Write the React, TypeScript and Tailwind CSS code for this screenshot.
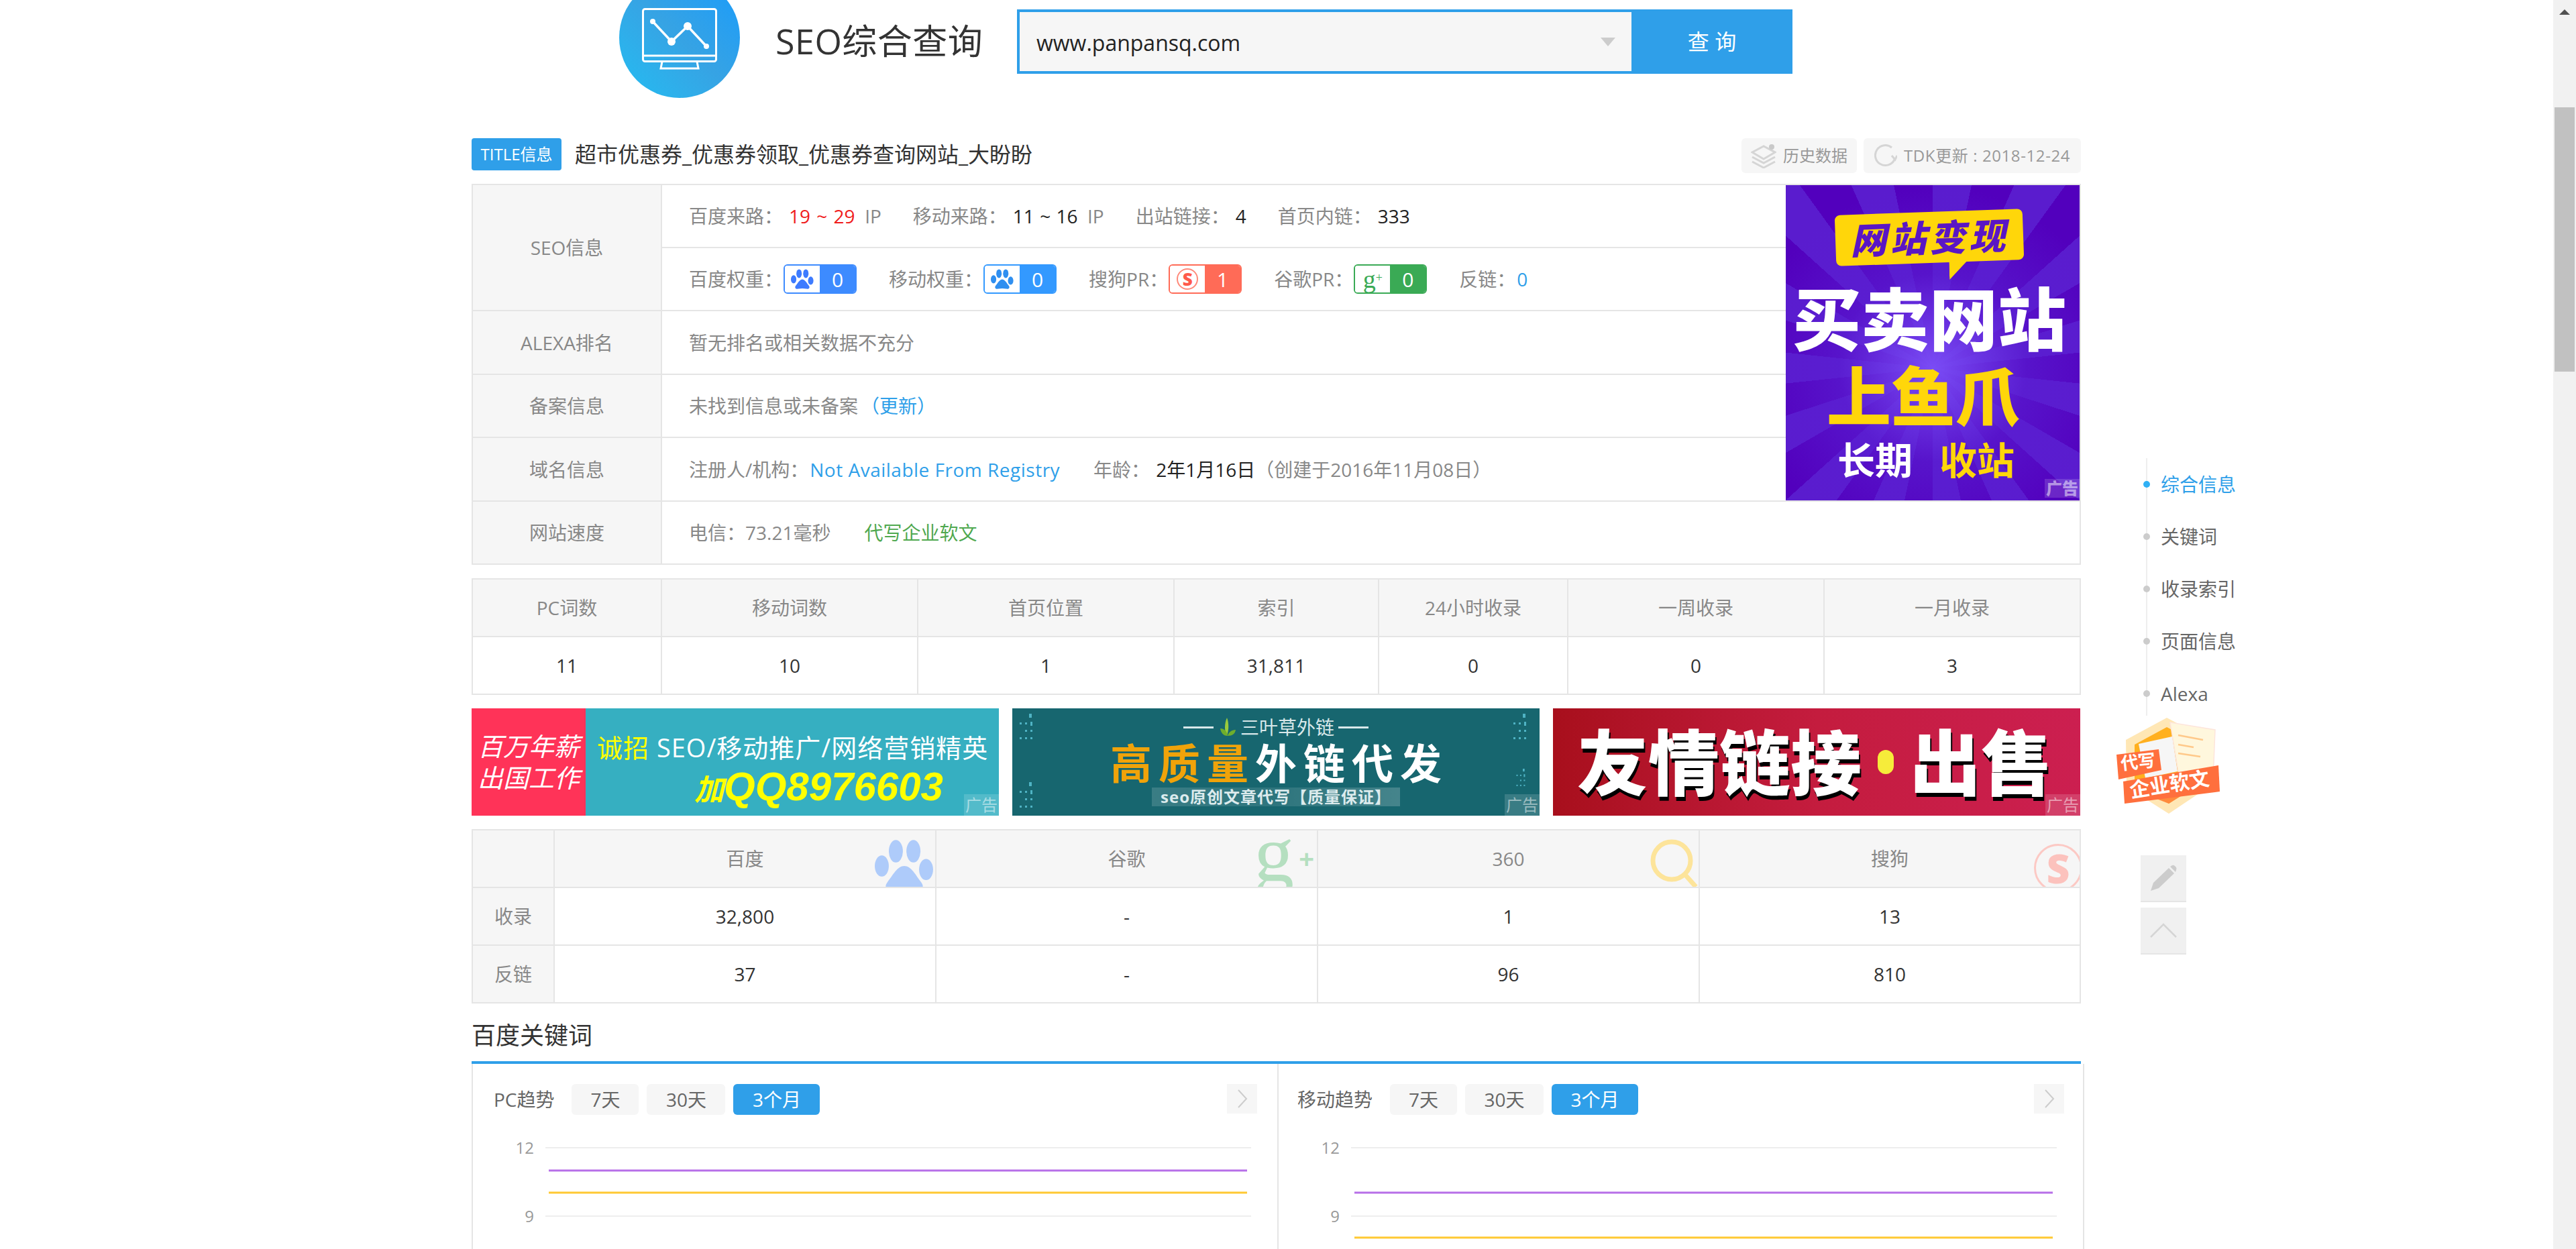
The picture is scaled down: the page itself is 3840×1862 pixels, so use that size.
import { FC, ReactNode } from "react";

const Paw: FC<{ className?: string; fill: string }> = ({ className, fill }) => (
  <svg viewBox="0 0 84 72" className={className} fill={fill}>
    <ellipse cx="10" cy="37" rx="10" ry="15" />
    <ellipse cx="30" cy="16" rx="10" ry="16" />
    <ellipse cx="55" cy="16" rx="10" ry="16" />
    <ellipse cx="73" cy="42" rx="10" ry="15" />
    <path d="M42 37C52 37 58 50 66 60C72 68 66 74 56 72C48 70 36 70 28 72C18 74 12 68 18 60C26 50 32 37 42 37Z" />
  </svg>
);

const Label: FC<{ children: ReactNode }> = ({ children }) => <span className="text-[#888]">{children}</span>;
const Val: FC<{ children: ReactNode }> = ({ children }) => <span className="text-[#222] ml-[9px] [word-spacing:1px]">{children}</span>;

const Rank: FC<{ border: string; bg: string; value: string; children: ReactNode }> = ({ border, bg, value, children }) => (
  <span className={`flex w-[109px] h-[44px] rounded-[6px] overflow-hidden border-2 ml-[1px] ${border}`}>
    <span className="w-[52px] flex items-center justify-center bg-white">{children}</span>
    <span className={`flex-1 flex items-center justify-center text-white text-[30px] ${bg}`}>{value}</span>
  </span>
);

const RowHead: FC<{ children: ReactNode }> = ({ children }) => (
  <div className="w-[282px] shrink-0 flex items-center justify-center bg-[#f6f6f6] border-r-2 border-[#e5e5e5] text-[#888]">{children}</div>
);

const AdTag: FC<{ className?: string }> = ({ className }) => (
  <span className={`absolute right-0 flex items-center justify-center w-[52px] text-[24px] leading-none bg-white/15 text-white/50 ${className}`}>广告</span>
);

const Cell: FC<{ head?: boolean; children?: ReactNode; last?: boolean }> = ({ head, children, last }) => (
  <div className={`flex items-center justify-center border-b-2 border-[#e5e5e5] ${last ? "" : "border-r-2"} ${head ? "bg-[#f6f6f6] text-[#888]" : "text-[#333]"}`}>
    {children}
  </div>
);

const Dots: FC<{ className?: string }> = ({ className }) => (
  <svg viewBox="0 0 40 44" className={className} fill="#4fb3c4">
    <rect x="20" y="0" width="4" height="6" />
    <rect x="6" y="13" width="3" height="3" />
    <rect x="14" y="13" width="3" height="3" />
    <rect x="22" y="12" width="3" height="6" />
    <rect x="14" y="24" width="3" height="3" />
    <rect x="22" y="24" width="3" height="3" />
    <rect x="6" y="35" width="3" height="3" />
    <rect x="14" y="35" width="3" height="3" />
    <rect x="22" y="35" width="3" height="3" />
  </svg>
);

const EngineHead: FC<{ name: string; children: ReactNode }> = ({ name, children }) => (
  <div className="relative overflow-hidden flex items-center justify-center bg-[#f6f6f6] text-[#888] border-b-2 border-r-2 border-[#e5e5e5]">
    {name}
    {children}
  </div>
);

const Tab: FC<{ active?: boolean; className: string; children: ReactNode }> = ({ active, className, children }) => (
  <span className={`flex items-center justify-center h-[46px] rounded-[6px] ${className} ${active ? "bg-[#2f9fe9] text-white" : "bg-[#f6f6f6] text-[#666]"}`}>
    {children}
  </span>
);

const TrendChart: FC<{ purple: number; yellow: number }> = ({ purple, yellow }) => (
  <svg width="1199" height="172" className="block" fontFamily="'Open Sans', sans-serif" fontSize="24" fill="#999">
    <text x="91" y="30" textAnchor="end">12</text>
    <text x="91" y="132" textAnchor="end">9</text>
    <line x1="108" x2="1160" y1="21" y2="21" stroke="#eeeeee" strokeWidth="2" />
    <line x1="108" x2="1160" y1="123" y2="123" stroke="#eeeeee" strokeWidth="2" />
    <line x1="113" x2="1154" y1={purple} y2={purple} stroke="#b76fe8" strokeWidth="3" />
    <line x1="113" x2="1154" y1={yellow} y2={yellow} stroke="#ffc933" strokeWidth="3" />
  </svg>
);

const TrendPanel: FC<{ title: string; pad: string; purple: number; yellow: number; border: string }> = ({ title, pad, purple, yellow, border }) => (
  <div className={`${border} border-[#e5e5e5]`}>
    <div className={`flex items-center h-[46px] mt-[30px] ${pad}`}>
      <span className="text-[#666] mr-[26px]">{title}</span>
      <div className="flex gap-[12px]">
        <Tab className="w-[100px]">7天</Tab>
        <Tab className="w-[117px]">30天</Tab>
        <Tab active className="w-[129px]">3个月</Tab>
      </div>
      <span className="ml-auto mb-[2px] w-[45px] h-[44px] bg-[#f6f6f6] flex items-center justify-center">
        <svg width="16" height="28" viewBox="0 0 16 28" fill="none" stroke="#cccccc" strokeWidth="2"><path d="M2 1L14 14L2 27" /></svg>
      </span>
    </div>
    <div className="mt-[28px]">
      <TrendChart purple={purple} yellow={yellow} />
    </div>
  </div>
);

const NavItem: FC<{ active?: boolean; children: ReactNode }> = ({ active, children }) => (
  <div className={`relative flex items-center h-[78px] pl-[20px] ${active ? "text-[#2f9fe9]" : "text-[#666]"}`}>
    <span className={`absolute -left-[6px] w-[10px] h-[10px] rounded-full ${active ? "bg-[#2fb0f5]" : "bg-[#cccccc]"}`} />
    {children}
  </div>
);

export default function App() {
  return (
    <div className="flex w-full h-[1862px] overflow-hidden bg-white text-[28px] font-['Open_Sans','Noto_Sans_CJK_SC',sans-serif]">
      <main className="w-[2399px] ml-[703px] shrink-0">
        {/* top search */}
        <div className="flex items-start h-[206px] pl-[220px]">
          <div className="w-[180px] h-[180px] -mt-[34px] shrink-0 rounded-full bg-linear-to-tr from-[#20bdf2] via-[#36a3e4] to-[#159bfb] flex items-center justify-center pt-[4px]">
            <svg width="112" height="92" viewBox="0 0 112 92" fill="none" stroke="white" strokeWidth="3">
              <rect x="1.5" y="1.5" width="109" height="78" rx="3" />
              <line x1="1.5" y1="71" x2="110" y2="71" />
              <path d="M30 80L28 90H84L82 80" />
              <path d="M16 20L44 50L68 27L96 57" strokeWidth="3.5" />
              <g fill="white" stroke="none">
                <circle cx="16" cy="20" r="4" />
                <circle cx="44" cy="50" r="6" />
                <circle cx="68" cy="27" r="6" />
                <circle cx="96" cy="57" r="4" />
              </g>
            </svg>
          </div>
          <h1 className="ml-[53px] mt-[26px] text-[52px] leading-[70px] tracking-[0.5px] text-[#333] whitespace-nowrap">SEO综合查询</h1>
          <div className="ml-auto mr-[430px] mt-[14px] flex w-[1156px] h-[96px] shrink-0">
            <div className="flex-1 flex items-center justify-between border-4 border-r-0 border-[#2f9fe9] bg-[#f6f6f6] pl-[25px] pr-[24px]">
              <span className="text-[32px] text-[#222] pt-[3px]">www.panpansq.com</span>
              <span className="w-0 h-0 border-x-[11px] border-t-[13px] border-x-transparent border-t-[#cccccc]" />
            </div>
            <button className="w-[240px] bg-[#2f9fe9] text-white text-[32px]">查 询</button>
          </div>
        </div>

        {/* title row */}
        <div className="flex h-[68px] items-start">
          <span className="flex items-center justify-center w-[134px] h-[48px] rounded-[4px] bg-[#2f9fe9] text-white text-[24px] whitespace-nowrap">TITLE信息</span>
          <span className="ml-[20px] h-[48px] flex items-center text-[32px] text-[#333]">超市优惠券_优惠券领取_优惠券查询网站_大盼盼</span>
          <span className="ml-auto flex items-center gap-[10px] w-[172px] h-[52px] pl-[14px] rounded-[6px] bg-[#f6f6f6] text-[24px] text-[#999]">
            <svg width="38" height="38" viewBox="0 0 38 38" fill="none" stroke="#d5d5d5" strokeWidth="3">
              <path d="M2 14L19 5L36 14L19 24Z" />
              <path d="M2 21L19 30L36 21" />
              <path d="M2 28L19 37L36 28" />
              <circle cx="31" cy="6" r="4" fill="#c9c9c9" stroke="none" />
            </svg>
            历史数据
          </span>
          <span className="ml-[10px] flex items-center gap-[10px] w-[324px] h-[52px] pl-[16px] rounded-[6px] bg-[#f6f6f6] text-[24px] tracking-[0.6px] text-[#999] whitespace-nowrap">
            <svg width="34" height="36" viewBox="0 0 34 36" fill="none" stroke="#d5d5d5" strokeWidth="3">
              <path d="M26 6A15 15 0 1 0 30 24" />
              <path d="M26 18L31 24L34 18" />
            </svg>
            TDK更新 : 2018-12-24
          </span>
        </div>

        {/* seo info */}
        <div className="relative border-2 border-b-0 border-[#e5e5e5]">
          <div className="flex h-[188px] border-b-2 border-[#e5e5e5]">
            <RowHead>SEO信息</RowHead>
            <div className="flex-1 flex flex-col">
              <div className="flex items-center h-[92px] pl-[40px] gap-[47px] border-b-2 border-[#e5e5e5] box-content">
                <span className="flex"><Label>百度来路：</Label><span className="text-[#f01c1c] ml-[9px] [word-spacing:2px]">19 ~ 29</span><Label>&nbsp;&nbsp;IP</Label></span>
                <span className="flex"><Label>移动来路：</Label><Val>11 ~ 16</Val><Label>&nbsp;&nbsp;IP</Label></span>
                <span className="flex"><Label>出站链接：</Label><Val>4</Val></span>
                <span className="flex"><Label>首页内链：</Label><Val>333</Val></span>
              </div>
              <div className="flex items-center h-[92px] pl-[40px] gap-[48px]">
                <span className="flex items-center">
                  <Label>百度权重：</Label>
                  <Rank border="border-[#3d8bff]" bg="bg-[#3d8bff]" value="0"><Paw fill="#3d7bff" className="w-[34px] h-[32px]" /></Rank>
                </span>
                <span className="flex items-center">
                  <Label>移动权重：</Label>
                  <Rank border="border-[#3399ff]" bg="bg-[#3399ff]" value="0"><Paw fill="#2f8ff0" className="w-[34px] h-[32px]" /></Rank>
                </span>
                <span className="flex items-center">
                  <Label>搜狗PR：</Label>
                  <Rank border="border-[#ff6b57]" bg="bg-[#ff6b57]" value="1">
                    <span className="flex items-center justify-center w-[32px] h-[32px] rounded-full border-2 border-[#ff8a7a] text-[#ff5a4a] text-[26px] font-black leading-none">S</span>
                  </Rank>
                </span>
                <span className="flex items-center">
                  <Label>谷歌PR：</Label>
                  <Rank border="border-[#3aaa55]" bg="bg-[#3aaa55]" value="0">
                    <span className="text-[#3aaa55] text-[38px] leading-none font-['Liberation_Serif',serif]">g<sup className="text-[18px]">+</sup></span>
                  </Rank>
                </span>
                <span className="flex items-center"><Label>反链：</Label><span className="text-[#2f9fe9] ml-[2px]">0</span></span>
              </div>
            </div>
          </div>
          <div className="flex h-[95px] border-b-2 border-[#e5e5e5]">
            <RowHead>ALEXA排名</RowHead>
            <div className="flex items-center pl-[40px] text-[#888]">暂无排名或相关数据不充分</div>
          </div>
          <div className="flex h-[94px] border-b-2 border-[#e5e5e5]">
            <RowHead>备案信息</RowHead>
            <div className="flex items-center pl-[40px] text-[#888]">未找到信息或未备案<span className="ml-[4px] text-[#2f9fe9]">（更新）</span></div>
          </div>
          <div className="flex h-[95px] border-b-2 border-[#e5e5e5]">
            <RowHead>域名信息</RowHead>
            <div className="flex items-center pl-[40px] text-[#888]">
              注册人/机构：<span className="ml-[2px] text-[#2f9fe9] tracking-[0.5px]">Not Available From Registry</span>
              <span className="ml-[50px]">年龄：</span>
              <Val>2年1月16日</Val>
              <span>（创建于2016年11月08日）</span>
            </div>
          </div>
          <div className="flex h-[94px] border-b-2 border-[#e5e5e5]">
            <RowHead>网站速度</RowHead>
            <div className="flex items-center pl-[40px] text-[#888]">
              电信：73.21毫秒<span className="ml-[50px] text-[#4fa84f]">代写企业软文</span>
            </div>
          </div>

          {/* ad over the table */}
          <div className="absolute right-0 top-0 w-[438px] h-[470px] overflow-hidden flex flex-col items-center pt-[40px] pr-[10px] font-black bg-[radial-gradient(circle_at_50%_58%,#7a4cf5_0%,rgba(90,30,210,0.65)_40%,rgba(85,0,190,0)_78%),repeating-conic-gradient(from_0deg_at_50%_58%,#5a1cce_0deg_12deg,#5200bd_12deg_24deg)]">
            <div className="relative -rotate-2 w-[280px] h-[76px] rounded-[8px] bg-[#ffd60a] flex items-center justify-center text-[#5a16c4] text-[54px] leading-none italic tracking-[5px] whitespace-nowrap">
              网站变现
              <span className="absolute left-[168px] top-[74px] w-[28px] h-[28px] bg-[#ffd60a] [clip-path:polygon(0_0,100%_0,0_100%)]" />
            </div>
            <div className="mt-[33px] text-[102px] leading-none text-white whitespace-nowrap">买卖网站</div>
            <div className="mt-[15px] mr-[18px] text-[96px] leading-none text-[#ffd60a] whitespace-nowrap">上鱼爪</div>
            <div className="mt-[19px] mr-[10px] flex gap-[40px] text-[56px] leading-none font-bold whitespace-nowrap">
              <span className="text-white">长期</span>
              <span className="text-[#ffd60a]">收站</span>
            </div>
            <AdTag className="bottom-[4px] h-[28px]" />
          </div>
        </div>

        {/* word counts */}
        <div className="mt-[20px] border-2 border-b-0 border-[#e5e5e5] grid grid-cols-[282px_382px_382px_305px_282px_382px_1fr] grid-rows-[86px_86px]">
          {["PC词数", "移动词数", "首页位置", "索引", "24小时收录", "一周收录", "一月收录"].map((t, i) => (
            <Cell key={t} head last={i === 6}>{t}</Cell>
          ))}
          {["11", "10", "1", "31,811", "0", "0", "3"].map((t, i) => (
            <Cell key={i} last={i === 6}>{t}</Cell>
          ))}
        </div>

        {/* banners */}
        <div className="mt-[20px] flex gap-[20px] h-[160px]">
          <div className="relative w-[786px] flex bg-[#36afc1] overflow-hidden">
            <div className="w-[170px] bg-[#ff3358] text-white text-[38px] leading-[47px] italic flex flex-col items-center justify-center whitespace-nowrap">
              <span>百万年薪</span>
              <span>出国工作</span>
            </div>
            <div className="flex-1 flex flex-col pl-[17px] pt-[36px]">
              <div className="text-[38px] leading-[44px] text-white whitespace-nowrap tracking-[1px]"><span className="text-[#ffff00]">诚招</span> SEO/移动推广/网络营销精英</div>
              <div className="mt-[7px] ml-[145px] text-[#ffff00] italic font-bold text-[60px] leading-[60px] whitespace-nowrap font-['Liberation_Sans','Noto_Sans_CJK_SC',sans-serif]"><span className="text-[44px]">加</span>QQ8976603</div>
            </div>
            <AdTag className="bottom-0 h-[32px]" />
          </div>

          <div className="relative w-[786px] flex flex-col items-center bg-[#17666f] overflow-hidden">
            <Dots className="absolute left-[5px] top-[8px] w-[40px] h-[44px]" />
            <Dots className="absolute left-[5px] bottom-[6px] w-[40px] h-[44px]" />
            <Dots className="absolute right-[5px] top-[8px] w-[40px] h-[44px]" />
            <Dots className="absolute right-[5px] bottom-[40px] w-[40px] h-[30px]" />
            <div className="mt-[13px] flex items-center gap-[6px] text-[28px] leading-[30px] text-[#d8e8ea] whitespace-nowrap">
              <span className="w-[45px] h-[3px] bg-[#d8e8ea]" />
              <svg width="26" height="28" viewBox="0 0 26 28" className="ml-[2px]">
                <path d="M12 0C15 8 15 18 12 26C8 22 8 8 12 0Z" fill="#9acb3c" />
                <path d="M2 16C8 16 12 20 13 27C6 27 3 22 2 16Z" fill="#6fae2c" />
                <path d="M25 18C19 18 14 22 13 27C20 27 24 24 25 18Z" fill="#6fae2c" />
              </svg>
              三叶草外链
              <span className="w-[45px] h-[3px] bg-[#d8e8ea]" />
            </div>
            <div className="mt-[8px] flex text-[62px] leading-[62px] font-bold tracking-[10px] -mr-[10px] whitespace-nowrap">
              <span className="text-[#f0a30a]">高质量</span>
              <span className="text-white">外链代发</span>
            </div>
            <div className="mt-[5px] w-[370px] h-[28px] flex items-center justify-center bg-linear-to-r from-white/15 via-white/10 to-white/20 text-[24px] tracking-[1px] font-bold text-[#dcebed] whitespace-nowrap">seo原创文章代写【质量保证】</div>
            <AdTag className="bottom-0 h-[32px]" />
          </div>

          <div className="relative w-[786px] flex items-center pl-[36px] overflow-hidden bg-linear-to-r from-[#a80f1c] via-[#c41c3e] to-[#cc1f50]">
            <div className="flex items-center text-[106px] leading-none font-black text-white whitespace-nowrap [text-shadow:2px_6px_0_#000]">
              <span>友情链接</span>
              <span className="w-[24px] h-[36px] rounded-full bg-[#f6ec3a] mx-[24px]" />
              <span>出售</span>
            </div>
            <AdTag className="bottom-0 h-[32px]" />
          </div>
        </div>

        {/* engines */}
        <div className="mt-[20px] border-2 border-b-0 border-[#e5e5e5] grid grid-cols-[122px_569px_569px_569px_1fr] grid-rows-[86px_86px_86px]">
          <Cell head />
          <EngineHead name="百度">
            <Paw fill="#aecbfa" className="absolute right-[2px] bottom-[-6px] w-[88px] h-[76px]" />
          </EngineHead>
          <EngineHead name="谷歌">
            <span className="absolute right-[34px] -top-[25px] text-[#b5dfc0] font-['Liberation_Serif',serif] text-[120px] leading-none">g</span>
            <span className="absolute right-[4px] top-[22px] text-[#b5dfc0] text-[40px] leading-[40px] font-bold">+</span>
          </EngineHead>
          <EngineHead name="360">
            <svg viewBox="0 0 74 72" className="absolute right-0 bottom-0 w-[74px] h-[72px]" fill="none" stroke="#fde49a" strokeWidth="7">
              <circle cx="34" cy="33" r="28" />
              <path d="M54 54L70 72" />
            </svg>
          </EngineHead>
          <div className="relative overflow-hidden flex items-center justify-center bg-[#f6f6f6] text-[#888] border-b-2 border-[#e5e5e5]">
            搜狗
            <span className="absolute -right-[4px] -bottom-[8px] w-[72px] h-[72px] rounded-full border-[3px] border-[#fcc9c4] flex items-center justify-center text-[#fcc2bd] text-[60px] leading-none font-black">S</span>
          </div>
          <Cell head>收录</Cell>
          {["32,800", "-", "1", "13"].map((t, i) => <Cell key={i} last={i === 3}>{t}</Cell>)}
          <Cell head>反链</Cell>
          {["37", "-", "96", "810"].map((t, i) => <Cell key={i} last={i === 3}>{t}</Cell>)}
        </div>

        {/* baidu keywords */}
        <h2 className="h-[86px] flex items-center pt-[10px] text-[36px] text-[#333] font-normal">百度关键词</h2>
        <div className="border-t-4 border-[#2f9fe9] grid grid-cols-[1203px_1fr] h-[280px]">
          <TrendPanel title="PC趋势" pad="pl-[31px] pr-[30px]" purple={55} yellow={88} border="border-l-2 border-r-2" />
          <TrendPanel title="移动趋势" pad="pl-[28px] pr-[28px]" purple={88} yellow={155} border="border-r-2" />
        </div>
      </main>

      {/* right rail */}
      <aside className="w-[704px] shrink-0 flex flex-col pt-[683px]">
        <div className="ml-[97px] h-[384px] border-l-2 border-[#eeeeee]">
          <NavItem active>综合信息</NavItem>
          <NavItem>关键词</NavItem>
          <NavItem>收录索引</NavItem>
          <NavItem>页面信息</NavItem>
          <NavItem>Alexa</NavItem>
        </div>
        <div className="relative ml-[38px] -mt-[7px] w-[190px] h-[170px] shrink-0">
          <svg viewBox="0 0 190 170" className="absolute inset-0 w-full h-full">
            <polygon points="90,10 152,43 157,110 93,153 30,113 29,43" fill="#ffe7b5" />
            <polygon points="90,24 140,50 142,105 93,138 42,108 42,50" fill="#ffb020" />
            <polygon points="60,125 130,115 93,138" fill="#ff8a3c" />
            <polygon points="95,17 162,28 159,103 107,90" fill="#fff7dd" stroke="#fde5dc" strokeWidth="1.5" />
            <line x1="107" y1="36" x2="144" y2="43" stroke="#ffc98a" strokeWidth="2.5" />
            <line x1="107" y1="50" x2="130" y2="54" stroke="#ffc98a" strokeWidth="2.5" />
            <line x1="107" y1="63" x2="140" y2="68" stroke="#ffc98a" strokeWidth="2.5" />
            <polygon points="48,49 98,38 106,90 58,100" fill="#f6f6f6" />
            <polygon points="15,65 78,57 82,88 18,102" fill="#ff6f3d" />
            <polygon points="25,105 167,81 169,120 27,138" fill="#ff6f3d" />
          </svg>
          <span className="absolute left-[21px] top-[62px] -rotate-6 text-white text-[26px] leading-none font-bold whitespace-nowrap">代写</span>
          <span className="absolute left-[34px] top-[94px] -rotate-[9deg] text-white text-[30px] leading-none font-bold whitespace-nowrap">企业软文</span>
        </div>
        <div className="ml-[89px] mt-[45px] flex flex-col gap-[8px]">
          <div className="w-[68px] h-[70px] bg-[#f0f0f0] border-b-2 border-[#e5e5e5] flex items-center justify-center">
            <svg width="40" height="40" viewBox="0 0 40 40" fill="#cccccc">
              <path d="M1 39L5 27L28 5L36 13L13 35Z" />
              <path d="M30 3L33 1Q35 0 37 2L39 4Q40 6 39 8L38 11Z" />
            </svg>
          </div>
          <div className="w-[68px] h-[70px] bg-[#f0f0f0] border-b-2 border-[#e5e5e5] flex items-center justify-center">
            <svg width="40" height="22" viewBox="0 0 40 22" fill="none" stroke="#d5d5d5" strokeWidth="2.5"><path d="M1 21L20 2L39 21" /></svg>
          </div>
        </div>
      </aside>

      {/* scrollbar */}
      <div className="w-[34px] shrink-0 bg-[#f1f1f1] flex flex-col items-center pt-[14px]">
        <span className="w-0 h-0 border-x-[8px] border-b-[8px] border-x-transparent border-b-[#505050]" />
        <span className="mt-[138px] w-[30px] h-[394px] bg-[#c1c1c1]" />
      </div>
    </div>
  );
}
